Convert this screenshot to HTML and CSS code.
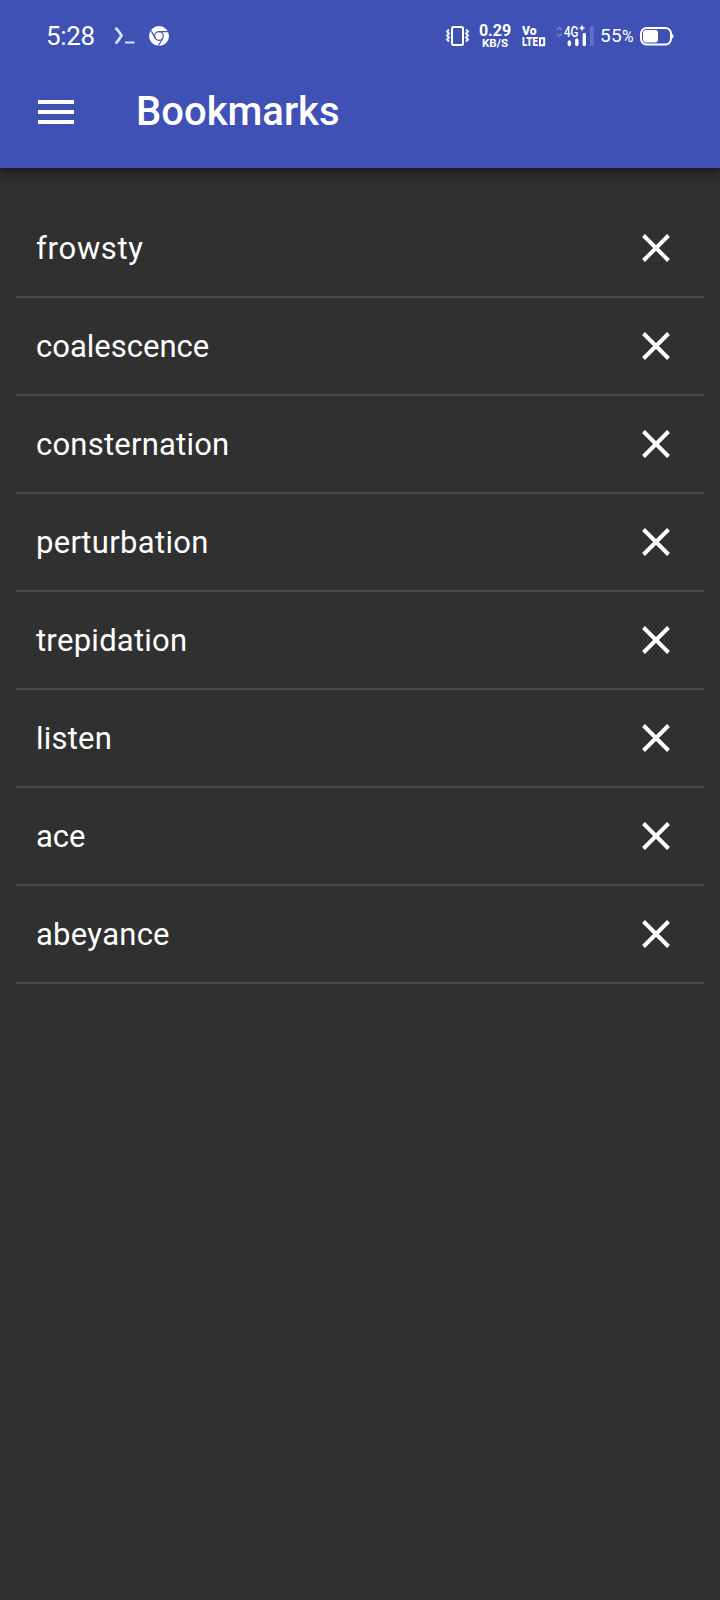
FILE: index.html
```html
<!DOCTYPE html>
<html lang="en">
<head>
<meta charset="utf-8">
<title>Bookmarks</title>
<link rel="stylesheet" href="styles.css">
</head>
<body>
<header class="header">
  <div class="status">
    <span class="clock">5:28</span>
    <svg class="prompt" width="22" height="18" viewBox="0 0 22 18"><path d="M1.500 1Q3.500 2.500 7.500 8.500Q3.500 15 1.500 16.500" fill="none" stroke="#dfe3ff" stroke-width="2.700"/><path d="M11 15.500h9.500" stroke="#dfe3ff" stroke-width="2"/></svg>
    <svg class="chrome" width="20" height="20" viewBox="0 0 20 20"><circle cx="10" cy="10" r="10" fill="#fff"/><g fill="none" stroke="#3f51b5" stroke-width="1.200"><circle cx="10" cy="10" r="4.300"/><path d="M10 5.700H19.200M6.300 12.200L2 4.600M13.700 12.200L9.300 20"/></g></svg>
    <svg class="vibrate" width="24" height="22" viewBox="0 0 24 22" fill="none" stroke="#fff"><rect x="6" y="2" width="11" height="18" rx="1.500" stroke-width="2"/><path d="M3 4.500L1 6.500L3 8.500L1 10.500L3 12.500L1 14.500L3 16.500M20 4.500L22 6.500L20 8.500L22 10.500L20 12.500L22 14.500L20 16.500" stroke-width="1.800"/></svg>
    <div class="speed"><span class="rate">0.29</span><span class="unit">KB/S</span></div>
    <svg class="volte" width="24" height="24" viewBox="0 0 24 24"><text x="0" y="10.800" textLength="14.500" lengthAdjust="spacingAndGlyphs">Vo</text><text x="0" y="22.200" textLength="16" lengthAdjust="spacingAndGlyphs">LTE</text><path d="M18 14.200h4.200v7h-4.200z" fill="none" stroke="#fff" stroke-width="2"/></svg>
    <svg class="signal" width="40" height="24" viewBox="0 0 40 24"><path d="M1 6L3.500 3.500L6 6M1 9.500L3.500 12L6 9.500" fill="none" stroke="#7381d0" stroke-width="1.600"/><text class="network" x="8" y="13" textLength="14.500" lengthAdjust="spacingAndGlyphs">4G</text><path d="M23.500 4h5M26 1.500v5" stroke="#fff" stroke-width="1.700"/><g stroke="#fff" stroke-width="3.400" stroke-linecap="round"><path d="M13.300 18v2.500M20.800 16v4.500M28.300 10.500v10"/></g><rect x="34" y="2" width="3.700" height="20" rx="1.500" fill="#6171c8"/></svg>
    <span class="percent"><span class="value">55</span><span class="sign">%</span></span>
    <svg class="battery" width="34" height="20" viewBox="0 0 34 20"><rect x="1" y="2" width="30" height="16.500" rx="5.500" fill="none" stroke="#fff" stroke-width="2"/><rect x="3" y="4" width="15" height="12.500" rx="3" fill="#fff"/><path d="M31.500 7.500q2 .5 2 2.700t-2 2.700z" fill="#fff"/></svg>
  </div>
  <div class="toolbar">
    <svg class="menu" width="36" height="24" viewBox="0 0 36 24"><path d="M0 2h36M0 12h36M0 22h36" stroke="#fff" stroke-width="4"/></svg>
    <h1 class="title">Bookmarks</h1>
  </div>
</header>
<ul class="list">
  <li class="row"><span class="word loose">frowsty</span><svg class="close" viewBox="0 0 28 28"><path d="M1.500 1.500L26.500 26.500M26.500 1.500L1.500 26.500"/></svg></li>
  <li class="row"><span class="word">coalescence</span><svg class="close" viewBox="0 0 28 28"><path d="M1.500 1.500L26.500 26.500M26.500 1.500L1.500 26.500"/></svg></li>
  <li class="row"><span class="word wide">consternation</span><svg class="close" viewBox="0 0 28 28"><path d="M1.500 1.500L26.500 26.500M26.500 1.500L1.500 26.500"/></svg></li>
  <li class="row"><span class="word wider">perturbation</span><svg class="close" viewBox="0 0 28 28"><path d="M1.500 1.500L26.500 26.500M26.500 1.500L1.500 26.500"/></svg></li>
  <li class="row"><span class="word wide">trepidation</span><svg class="close" viewBox="0 0 28 28"><path d="M1.500 1.500L26.500 26.500M26.500 1.500L1.500 26.500"/></svg></li>
  <li class="row"><span class="word wide">listen</span><svg class="close" viewBox="0 0 28 28"><path d="M1.500 1.500L26.500 26.500M26.500 1.500L1.500 26.500"/></svg></li>
  <li class="row"><span class="word">ace</span><svg class="close" viewBox="0 0 28 28"><path d="M1.500 1.500L26.500 26.500M26.500 1.500L1.500 26.500"/></svg></li>
  <li class="row"><span class="word wide">abeyance</span><svg class="close" viewBox="0 0 28 28"><path d="M1.500 1.500L26.500 26.500M26.500 1.500L1.500 26.500"/></svg></li>
</ul>
</body>
</html>
```

FILE: styles.css
```css
* { box-sizing: border-box; }
body { margin: 0; min-height: 1600px; background: #303030; color: #fff; font-family: Roboto, sans-serif; }
svg { display: block; flex: none; }
.header { height: 168px; background: #3f51b5; box-shadow: 0 4px 10px rgba(0, 0, 0, .5); }
.status { display: flex; align-items: center; height: 72px; padding-left: 46px; }
.clock { width: 68px; font-size: 26px; letter-spacing: -.3px; }
.prompt { margin-right: 13px; }
.chrome { margin-right: 277px; }
.vibrate { margin-right: 9px; }
.speed { display: flex; flex-direction: column; align-items: center; width: 32px; font-weight: 700; }
.rate { font-size: 16px; line-height: 13px; }
.unit { font-size: 11.500px; line-height: 12px; }
.volte { margin-left: 11px; font-size: 12.500px; font-weight: 900; fill: #fff; }
.signal { margin-left: 10px; }
.network { font-size: 14px; font-weight: 500; fill: #fff; }
.percent { display: flex; align-items: baseline; width: 40px; margin-left: 4px; }
.value { font-size: 19px; letter-spacing: .3px; line-height: 20px; }
.sign { font-size: 17px; line-height: 20px; width: 13px; transform: scaleX(.93); transform-origin: left; }
.toolbar { display: flex; align-items: center; height: 80px; padding-left: 38px; }
.title { margin: 0 0 0 62px; font-size: 40px; line-height: 48px; font-weight: 500; }
.list { list-style: none; margin: 32px 16px 0; padding: 0; }
.row { display: flex; align-items: center; justify-content: space-between; height: 98px; padding: 0 34px 0 20px; border-bottom: 2px solid #4a4a4a; font-size: 31px; }
.word { font-kerning: none; }
.wide { letter-spacing: .22px; }
.wider { letter-spacing: .32px; }
.loose { letter-spacing: .65px; }
.close { width: 28px; height: 28px; fill: none; stroke: #fff; stroke-width: 4; overflow: visible; }
```
